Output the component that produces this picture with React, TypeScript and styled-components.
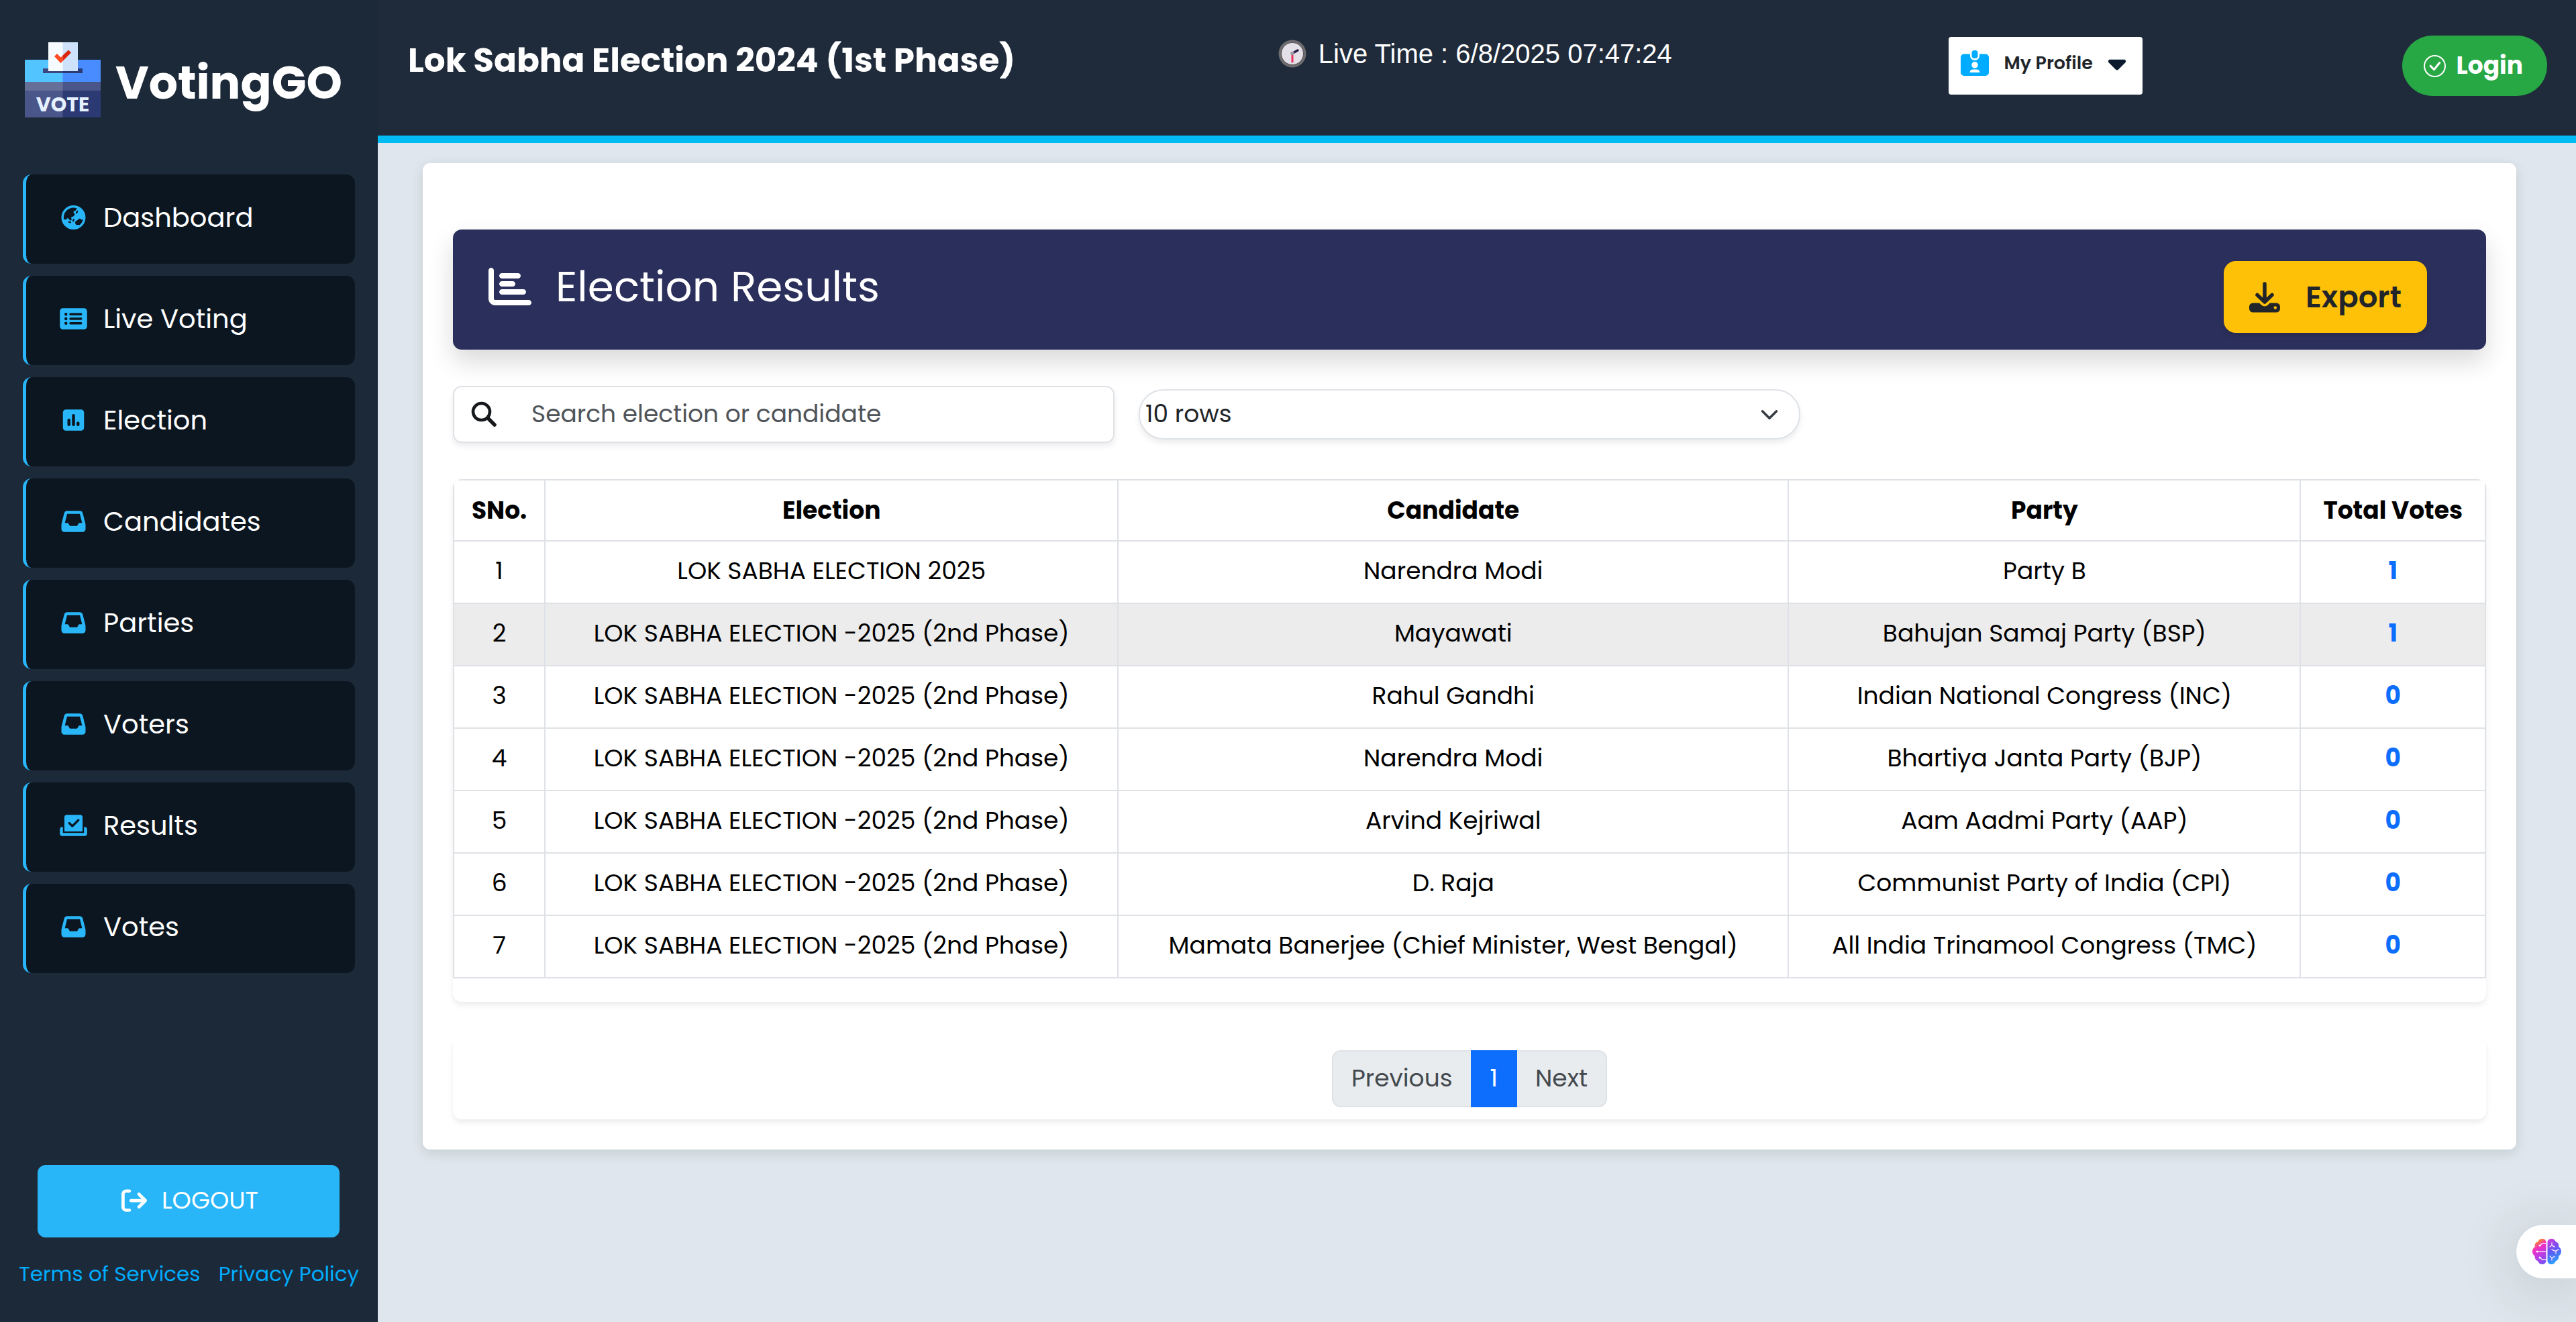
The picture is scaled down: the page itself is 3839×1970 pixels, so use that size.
import React, { useState } from "react";
import styled, { createGlobalStyle } from "styled-components";
import {
  FaArrowRightFromBracket,
  FaCaretDown,
  FaChartBar,
  FaCheckToSlot,
  FaEarthAsia,
  FaInbox,
  FaRectangleList,
  FaSquarePollVertical,
} from "react-icons/fa6";

const GlobalStyle = createGlobalStyle`
  *, *::before, *::after { box-sizing: border-box; }
  body { margin: 0; background: #dfe6ed; }
  body, button, input, select {
    font-family: Poppins, Inter, "Open Sans", sans-serif;
    font-size: 36px;
    line-height: 54px;
  }
  button { cursor: pointer; }
`;

const Page = styled.div`
  display: grid;
  grid-template-columns: 563px 1fr;
  min-height: 100vh;
`;

/* Sidebar */

const Sidebar = styled.aside`
  display: flex;
  flex-direction: column;
  padding: 62px 28px 45px;
  background: #1c2938;
`;

const Brand = styled.div`
  display: flex;
  align-items: center;
  gap: 22px;
  height: 113px;
  padding-left: 9px;
  color: #fff;
  font-size: 68px;
  font-weight: 700;

  svg {
    flex: none;
    width: 113px;
    height: 113px;
    overflow: visible;
  }

  span {
    padding-top: 10px;
  }
`;

const NavList = styled.nav`
  display: flex;
  flex-direction: column;
  gap: 18px;
  margin: 85px 6px 0;
`;

const NavLink = styled.a`
  display: flex;
  align-items: center;
  gap: 24px;
  height: 133px;
  padding: 0 50px 5px;
  border-left: 5px solid #29b6f9;
  border-radius: 13px;
  background: #0c1620;
  color: #fff;
  font-size: 40px;
  text-decoration: none;

  svg {
    width: 41px;
    height: 36px;
    color: #29b6f9;
  }
`;

const SidebarFooter = styled.div`
  display: flex;
  flex-direction: column;
  gap: 27px;
  margin-top: auto;
`;

const LogoutButton = styled.button`
  display: flex;
  align-items: center;
  justify-content: center;
  gap: 22px;
  height: 108px;
  margin: 0 29px 0 28px;
  padding: 0 0 2px 4px;
  border: 0;
  border-radius: 12px;
  background: #29b6f9;
  color: #fff;

  svg {
    width: 38px;
    height: 38px;
  }
`;

const LegalLinks = styled.div`
  display: flex;
  justify-content: space-between;

  a {
    color: #00acff;
    font-size: 31px;
    text-decoration: none;
    white-space: nowrap;
  }
`;

/* Top bar */

const Main = styled.div`
  min-width: 0;
`;

const TopBar = styled.header`
  display: grid;
  grid-template-columns: 48fr 37fr 33fr;
  align-items: start;
  height: 213px;
  padding: 53px 43px 0 45px;
  border-bottom: 11px solid #00bcf5;
  background: #1f2b3a;
  color: #fff;
`;

const PageTitle = styled.h1`
  margin: 0;
  font-size: 50px;
  line-height: 74px;
  font-weight: 700;
`;

const LiveTime = styled.div`
  display: flex;
  align-items: center;
  gap: 18px;
  font-family: Arial, "Liberation Sans", sans-serif;
  font-size: 40px;

  svg {
    width: 42px;
    height: 42px;
  }
`;

const Actions = styled.div`
  display: flex;
  justify-content: space-between;
`;

const ProfileButton = styled.button`
  display: flex;
  align-items: center;
  gap: 22px;
  height: 86px;
  margin-top: 2px;
  padding: 0 24px 8px 18px;
  border: 0;
  border-radius: 4px;
  background: #fff;
  color: #212529;
  font-size: 27px;
  font-weight: 600;

  svg:first-child {
    width: 42px;
    height: 38px;
    color: #00acff;
  }

  svg:last-child {
    width: 28px;
    height: 42px;
    color: #0b1a2c;
  }
`;

const LoginButton = styled.button`
  display: flex;
  align-items: center;
  gap: 16px;
  height: 90px;
  padding: 0 36px 0 32px;
  border: 0;
  border-radius: 45px;
  background: #28a745;
  color: #fff;
  font-weight: 700;

  svg {
    width: 33px;
    height: 33px;
  }
`;

/* Results card */

const Card = styled.main`
  margin: 30px 89px 0 67px;
  padding: 99px 45px 45px;
  border-radius: 11px;
  background: #fff;
  box-shadow: 0 5px 18px rgba(0, 30, 20, 0.12);
`;

const Banner = styled.div`
  display: flex;
  align-items: center;
  justify-content: space-between;
  height: 179px;
  padding: 0 88px 0 53px;
  border-radius: 13px;
  background: #2b2f5b;
  box-shadow: 0 18px 36px rgba(0, 0, 0, 0.15);
`;

const BannerTitle = styled.h2`
  display: flex;
  align-items: center;
  gap: 36px;
  margin: 0;
  padding-bottom: 9px;
  color: #fff;
  font-size: 63px;
  line-height: 76px;
  font-weight: 400;

  svg {
    width: 64px;
    height: 64px;
  }
`;

const ExportButton = styled.button`
  display: flex;
  align-items: center;
  gap: 38px;
  height: 107px;
  margin-top: 22px;
  padding: 0 38px;
  border: 0;
  border-radius: 18px;
  background: #ffc107;
  box-shadow: 0 5px 9px rgba(0, 0, 0, 0.1);
  color: #212529;
  font-size: 45px;
  font-weight: 600;

  svg {
    width: 46px;
    height: 46px;
  }
`;

const Filters = styled.div`
  display: grid;
  grid-template-columns: repeat(3, 1fr);
  align-items: center;
  gap: 36px;
  margin: 54px 0;
`;

const SearchField = styled.label`
  display: flex;
  align-items: center;
  gap: 52px;
  height: 85px;
  padding: 0 25px 2px;
  border: 2px solid #dee2e6;
  border-radius: 13px;
  background: #fff;
  box-shadow: 0 5px 9px rgba(0, 0, 0, 0.075);

  svg {
    flex: none;
    width: 38px;
    height: 38px;
    overflow: visible;
  }

  input {
    flex: 1;
    min-width: 0;
    padding: 0;
    border: 0;
    outline: 0;
    background: none;
  }

  input::placeholder {
    color: #4f5459;
    opacity: 1;
  }
`;

const SelectField = styled.label`
  display: grid;
  align-items: center;

  > * {
    grid-area: 1 / 1;
  }

  select {
    width: 100%;
    height: 75px;
    padding: 0 80px 2px 8px;
    border: 2px solid #dee2e6;
    border-radius: 37px;
    background: #fff;
    box-shadow: 0 5px 9px rgba(0, 0, 0, 0.075);
    color: #212529;
    appearance: none;
  }

  svg {
    justify-self: end;
    width: 28px;
    height: 28px;
    margin-right: 32px;
    pointer-events: none;
  }
`;

const Panel = styled.div`
  border-radius: 13px;
  background: #fff;
  box-shadow: 0 5px 9px rgba(0, 0, 0, 0.075);
`;

const TablePanel = styled(Panel)`
  padding-bottom: 35px;
  overflow: hidden;
`;

const ResultsTable = styled.table`
  width: 100%;
  table-layout: fixed;
  border-collapse: collapse;
  color: #000;
  text-align: center;

  th,
  td {
    height: 93px;
    padding: 0 0 3px;
    border: 2px solid #dee2e6;
    font-size: 36px;
  }

  th {
    height: 91px;
    padding: 0;
    font-weight: 700;
  }
`;

const ResultRow = styled.tr<{ $active: boolean }>`
  background: ${(p) => (p.$active ? "#ececec" : "#fff")};

  td:last-child {
    color: #0d6efd;
    font-weight: 700;
  }
`;

const PaginationPanel = styled(Panel)`
  display: flex;
  justify-content: center;
  margin-top: 54px;
  padding: 18px 0;
`;

const PageButton = styled.button<{ $current?: boolean }>`
  height: 85px;
  padding: 0 27px 2px;
  border: 2px solid ${(p) => (p.$current ? "#0d6efd" : "#dee2e6")};
  background: ${(p) => (p.$current ? "#0d6efd" : "#e9ecef")};
  color: ${(p) => (p.$current ? "#fff" : "#43494e")};

  &:first-child {
    border-right: 0;
    border-radius: 13px 0 0 13px;
  }

  &:last-child {
    border-left: 0;
    border-radius: 0 13px 13px 0;
  }
`;

const AssistantButton = styled.button`
  position: fixed;
  right: 0;
  bottom: 64px;
  display: flex;
  align-items: center;
  height: 82px;
  padding: 0 22px 0 24px;
  border: 1px solid #cdd6df;
  border-right: 0;
  border-radius: 41px 0 0 41px;
  background: #fff;
  box-shadow: 0 12px 90px rgba(40, 60, 40, 0.2);

  svg {
    width: 43px;
    height: 40px;
  }
`;

/* Drawings */

const BallotLogo = () => (
  <svg viewBox="0 0 113 113" aria-hidden="true">
    <path fill="#52c4ff" d="M0 27h57v34H0z" />
    <path fill="#488cff" d="M56.500 27H113v34H56.500z" />
    <path fill="#666f98" d="M0 60h57v14H0z" />
    <path fill="#4a568a" d="M56.500 60H113v14H56.500z" />
    <path fill="#4a568a" d="M0 73h57v40H0z" />
    <path fill="#2c3a73" d="M56.500 73H113v40H56.500z" />
    <path fill="#3c4780" d="M27 40h30v7H27z" />
    <path fill="#2c3a73" d="M56.500 40H86v7H56.500z" />
    <path fill="#f6fbff" d="M35 1h22v43H35z" />
    <path fill="#cfe2fb" d="M56.500 1H79v43H56.500z" />
    <path fill="#ff4a1f" d="M44 22l4-4 5.500 5.500 3-3V29L53.500 32z" />
    <path fill="#d8260f" d="M56.500 20.500L65 12.500l4 4L56.500 29z" />
    <text x="56.500" y="104" textAnchor="middle" fill="#e6f1ff" fontSize="30" fontWeight="700">
      VOTE
    </text>
  </svg>
);

const Clock = () => (
  <svg viewBox="0 0 42 42" aria-hidden="true">
    <circle cx="21" cy="21" r="20.500" fill="#6f6c70" />
    <circle cx="21" cy="21" r="16.500" fill="#e4e0e8" stroke="#545156" strokeWidth="1" />
    <path d="M21 20.500l8-4.500" stroke="#2a1a4a" strokeWidth="3.500" strokeLinecap="round" />
    <path d="M21 21v12" stroke="#ee2f5c" strokeWidth="3" strokeLinecap="round" />
    <circle cx="21" cy="20.500" r="2.800" fill="#9b98a2" />
  </svg>
);

const ProfileBadge = () => (
  <svg viewBox="0 0 42 38" aria-hidden="true">
    <path
      fill="currentColor"
      fillRule="evenodd"
      d="M5 5.500h9V8a7 7 0 0 0 14 0V5.500h9a5 5 0 0 1 5 5V33a5 5 0 0 1-5 5H5a5 5 0 0 1-5-5V10.500a5 5 0 0 1 5-5zM21 17a4.800 4.800 0 1 0 0 9.600 4.800 4.800 0 0 0 0-9.600zm-3 11.500a4.500 4.500 0 0 0-4.500 4.500h15a4.500 4.500 0 0 0-4.500-4.500z"
    />
    <rect x="16.500" width="9" height="12" rx="4" fill="currentColor" />
  </svg>
);

const CircledCheck = () => (
  <svg viewBox="0 0 16 16" fill="currentColor" aria-hidden="true">
    <path d="M8 15A7 7 0 1 1 8 1a7 7 0 0 1 0 14m0 1A8 8 0 1 0 8 0a8 8 0 0 0 0 16" />
    <path d="M10.970 4.970a.235.235 0 0 0-.02.022L7.477 9.417 5.384 7.323a.75.75 0 0 0-1.060 1.060L6.970 11.030a.75.75 0 0 0 1.079-.02l3.992-4.990a.75.75 0 0 0-1.071-1.050" />
  </svg>
);

const DownloadTray = () => (
  <svg viewBox="0 0 46 46" fill="none" aria-hidden="true">
    <path
      d="M23 3v26M12 19.500l11 10.500 11-10.500"
      stroke="currentColor"
      strokeWidth="5.500"
      strokeLinecap="round"
      strokeLinejoin="round"
    />
    <path
      fill="currentColor"
      fillRule="evenodd"
      d="M5.500 31.500H15l3.500 3.300a6.500 6.500 0 0 0 9 0l3.500-3.300h9.500A5.500 5.500 0 0 1 46 37v3a5.500 5.500 0 0 1-5.500 5.500h-35A5.500 5.500 0 0 1 0 40v-3a5.500 5.500 0 0 1 5.500-5.500zM38.800 36.300a2.200 2.200 0 1 0 0 4.400 2.200 2.200 0 0 0 0-4.400z"
    />
  </svg>
);

const Magnifier = () => (
  <svg viewBox="0 0 38 38" fill="none" stroke="#16191c" aria-hidden="true">
    <circle cx="15.500" cy="15.500" r="12.500" strokeWidth="4.600" />
    <path d="M25 25l10 10" strokeWidth="5.500" strokeLinecap="round" />
  </svg>
);

const Chevron = () => (
  <svg viewBox="0 0 16 16" fill="none" aria-hidden="true">
    <path d="M2 5l6 6 6-6" stroke="#343a40" strokeWidth="2" strokeLinecap="round" strokeLinejoin="round" />
  </svg>
);

const Brain = () => (
  <svg viewBox="0 0 43 40" fill="none" aria-hidden="true">
    <defs>
      <linearGradient id="brainLeft" x1="3" y1="4" x2="24" y2="36" gradientUnits="userSpaceOnUse">
        <stop offset="0" stopColor="#ffa200" />
        <stop offset="0.300" stopColor="#f52fc0" />
        <stop offset="0.550" stopColor="#c63ae0" />
        <stop offset="1" stopColor="#6a55f5" />
      </linearGradient>
      <linearGradient id="brainRight" x1="22" y1="2" x2="38" y2="36" gradientUnits="userSpaceOnUse">
        <stop offset="0" stopColor="#d23ade" />
        <stop offset="0.500" stopColor="#5f58f5" />
        <stop offset="1" stopColor="#2aa5ff" />
      </linearGradient>
    </defs>
    <path
      fill="url(#brainLeft)"
      d="M20.500 6.500C20.500 3 18 1 14.500 1 11 1 9 3 8.300 5.300 5 6.300 3 9 3.800 13 1.300 14.500 0 17 0 20c0 2.800 1.300 5 3.500 6.500C3.300 30 5 33 8 34c1.200 3 3.500 5 6.500 5 3.500 0 6-2 6-5.500z"
    />
    <path
      fill="url(#brainRight)"
      d="M22.500 6.500C22.500 3 25 1 28.500 1 32 1 34 3 34.700 5.300 38 6.300 40 9 39.200 13 41.700 14.500 43 17 43 20c0 2.800-1.300 5-3.500 6.500C39.700 30 38 33 35 34c-1.200 3-3.500 5-6.500 5-3.500 0-6-2-6-5.500z"
    />
    <path
      stroke="#f3dcff"
      strokeWidth="1.400"
      strokeLinecap="round"
      d="M20.500 8h-6l-3 3M20.500 20H8M20.500 32h-6l-3-3M29 7v4l-3 2M29 11l4 2M29 17l5 2.500 5-2.500M35 19.500V23M26 27l3 2.500 4-2M29 29.500V33"
    />
    <circle cx="11" cy="11" r="1.500" fill="#fff" />
    <circle cx="7" cy="20" r="1.500" fill="#fff" />
    <circle cx="11" cy="29" r="1.500" fill="#fff" />
  </svg>
);

/* Data */

const navItems = [
  { label: "Dashboard", icon: FaEarthAsia },
  { label: "Live Voting", icon: FaRectangleList },
  { label: "Election", icon: FaSquarePollVertical },
  { label: "Candidates", icon: FaInbox },
  { label: "Parties", icon: FaInbox },
  { label: "Voters", icon: FaInbox },
  { label: "Results", icon: FaCheckToSlot },
  { label: "Votes", icon: FaInbox },
];

const secondPhase = "LOK SABHA ELECTION -2025 (2nd Phase)";

const results = [
  { election: "LOK SABHA ELECTION 2025", candidate: "Narendra Modi", party: "Party B", votes: 1 },
  { election: secondPhase, candidate: "Mayawati", party: "Bahujan Samaj Party (BSP)", votes: 1 },
  { election: secondPhase, candidate: "Rahul Gandhi", party: "Indian National Congress (INC)", votes: 0 },
  { election: secondPhase, candidate: "Narendra Modi", party: "Bhartiya Janta Party (BJP)", votes: 0 },
  { election: secondPhase, candidate: "Arvind Kejriwal", party: "Aam Aadmi Party (AAP)", votes: 0 },
  { election: secondPhase, candidate: "D. Raja", party: "Communist Party of India (CPI)", votes: 0 },
  {
    election: secondPhase,
    candidate: "Mamata Banerjee (Chief Minister, West Bengal)",
    party: "All India Trinamool Congress (TMC)",
    votes: 0,
  },
];

const columns = [
  { label: "SNo.", width: "4.5%" },
  { label: "Election", width: "28.2%" },
  { label: "Candidate", width: "33%" },
  { label: "Party", width: "25.2%" },
  { label: "Total Votes", width: "9.1%" },
];

export default function App() {
  const [query, setQuery] = useState("");
  const [rows, setRows] = useState("10");
  const term = query.toLowerCase();
  const visible = results.filter((r) => `${r.election} ${r.candidate}`.toLowerCase().includes(term));

  return (
    <>
      <GlobalStyle />
      <Page>
        <Sidebar>
          <Brand>
            <BallotLogo />
            <span>VotingGO</span>
          </Brand>
          <NavList>
            {navItems.map(({ label, icon: Icon }) => (
              <NavLink href="#" key={label}>
                <Icon />
                {label}
              </NavLink>
            ))}
          </NavList>
          <SidebarFooter>
            <LogoutButton type="button">
              <FaArrowRightFromBracket />
              LOGOUT
            </LogoutButton>
            <LegalLinks>
              <a href="#">Terms of Services</a>
              <a href="#">Privacy Policy</a>
            </LegalLinks>
          </SidebarFooter>
        </Sidebar>

        <Main>
          <TopBar>
            <PageTitle>Lok Sabha Election 2024 (1st Phase)</PageTitle>
            <LiveTime>
              <Clock />
              Live Time : 6/8/2025 07:47:24
            </LiveTime>
            <Actions>
              <ProfileButton type="button">
                <ProfileBadge />
                My Profile
                <FaCaretDown />
              </ProfileButton>
              <LoginButton type="button">
                <CircledCheck />
                Login
              </LoginButton>
            </Actions>
          </TopBar>

          <Card>
            <Banner>
              <BannerTitle>
                <FaChartBar />
                Election Results
              </BannerTitle>
              <ExportButton type="button">
                <DownloadTray />
                Export
              </ExportButton>
            </Banner>

            <Filters>
              <SearchField>
                <Magnifier />
                <input
                  type="text"
                  aria-label="Search election or candidate"
                  placeholder="Search election or candidate"
                  value={query}
                  onChange={(e) => setQuery(e.target.value)}
                />
              </SearchField>
              <SelectField>
                <select aria-label="Rows per page" value={rows} onChange={(e) => setRows(e.target.value)}>
                  <option value="10">10 rows</option>
                  <option value="25">25 rows</option>
                  <option value="50">50 rows</option>
                </select>
                <Chevron />
              </SelectField>
            </Filters>

            <TablePanel>
              <ResultsTable>
                <colgroup>
                  {columns.map((c) => (
                    <col key={c.label} style={{ width: c.width }} />
                  ))}
                </colgroup>
                <thead>
                  <tr>
                    {columns.map((c) => (
                      <th key={c.label} scope="col">
                        {c.label}
                      </th>
                    ))}
                  </tr>
                </thead>
                <tbody>
                  {visible.map((r, i) => (
                    <ResultRow key={r.election + r.candidate} $active={i === 1}>
                      <td>{i + 1}</td>
                      <td>{r.election}</td>
                      <td>{r.candidate}</td>
                      <td>{r.party}</td>
                      <td>{r.votes}</td>
                    </ResultRow>
                  ))}
                </tbody>
              </ResultsTable>
            </TablePanel>

            <PaginationPanel>
              <PageButton type="button">Previous</PageButton>
              <PageButton type="button" $current>
                1
              </PageButton>
              <PageButton type="button">Next</PageButton>
            </PaginationPanel>
          </Card>
        </Main>
      </Page>
      <AssistantButton type="button" aria-label="Assistant">
        <Brain />
      </AssistantButton>
    </>
  );
}
